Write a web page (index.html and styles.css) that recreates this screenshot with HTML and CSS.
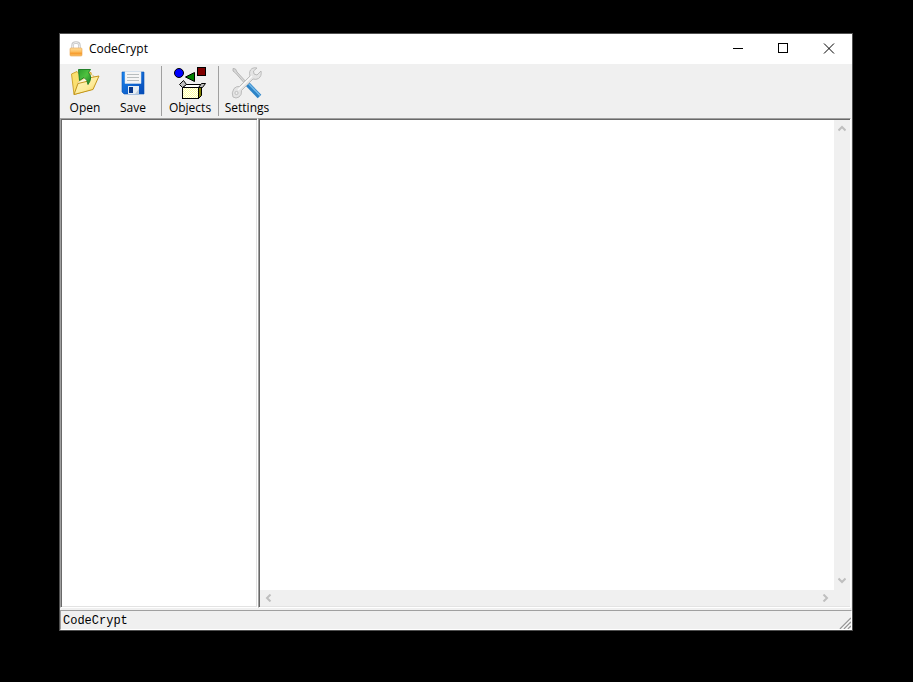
FILE: index.html
```html
<!DOCTYPE html>
<html lang="en">
<head>
<meta charset="utf-8">
<title>CodeCrypt</title>
<link rel="stylesheet" href="styles.css">
</head>
<body>
<main class="window">
  <header class="titlebar">
    <svg class="app-icon" viewBox="0 0 16 16" aria-hidden="true">
      <defs><linearGradient id="lock" x2="0" y2="1"><stop stop-color="#ffe0a0"/><stop offset=".5" stop-color="#fdbb59"/><stop offset=".65" stop-color="#f79a2b"/><stop offset="1" stop-color="#fbc46c"/></linearGradient></defs>
      <path d="M4.500 8V4.500Q4.500 1.500 8 1.500T11.500 4.500V8" fill="none" stroke="#c4c4c4" stroke-width="2.400"/>
      <path d="M4.500 7V4.500Q4.500 1.500 8 1.500T11.500 4.500V7" fill="none" stroke="#eee" stroke-width="1"/>
      <rect x="2" y="7" width="12" height="8" rx="1" fill="url(#lock)" stroke="#e9a24c" stroke-width=".6"/>
    </svg>
    <h1 class="title">CodeCrypt</h1>
    <div class="caption-buttons">
      <button class="caption" aria-label="Minimize"><svg viewBox="0 0 11 11" shape-rendering="crispEdges"><path d="M1 4.500H11"/></svg></button>
      <button class="caption" aria-label="Maximize"><svg viewBox="0 0 11 11" shape-rendering="crispEdges"><rect x=".5" y="-.5" width="9" height="9"/></svg></button>
      <button class="caption" aria-label="Close"><svg viewBox="0 0 11 11"><path d="M0 -.5L10 9.500M10 -.5L0 9.500"/></svg></button>
    </div>
  </header>

  <nav class="toolbar" aria-label="Toolbar">
    <button class="tool">
      <svg viewBox="0 0 32 32" aria-hidden="true">
        <defs><linearGradient id="fold" x2="1" y2="1"><stop stop-color="#fff8c8"/><stop offset=".6" stop-color="#fdeb98"/><stop offset="1" stop-color="#f0c53a"/></linearGradient>
        <linearGradient id="arrow" x2="1" y2="1"><stop stop-color="#2c9e2c"/><stop offset=".5" stop-color="#4fc240"/><stop offset="1" stop-color="#168020"/></linearGradient></defs>
        <path d="M2.500 7L8 4.500L10.500 7L22 5.500L24 22L5 27.500Z" fill="#fbe070" stroke="#cfa530"/>
        <path d="M9 15L22 7.500L25 9L22 22L6 26Z" fill="#fff9e0" stroke="#dcc070" stroke-width=".7"/>
        <path d="M5 27.500L9 16.500L19.500 14L22 10.500L30 9L24 22.500Z" fill="url(#fold)" stroke="#c4961b"/>
        <path d="M9.500 2.500H21.500L19.500 5.500Q24 10.500 19 17.500Q18.500 12.500 15 10.500L10.500 13.500Z" fill="url(#arrow)" stroke="#238029" stroke-width="1"/>
      </svg>
      <span>Open</span>
    </button>
    <button class="tool">
      <svg viewBox="0 0 32 32" aria-hidden="true">
        <defs><linearGradient id="disk" x2="1" y2="1"><stop stop-color="#1c86ee"/><stop offset="1" stop-color="#0649b6"/></linearGradient></defs>
        <path d="M5 5H27V27H7L5 25Z" fill="url(#disk)" stroke="#0754b8" stroke-width=".6"/>
        <path d="M8 4.500H24V16.500H8Z" fill="#f5f5f5" stroke="#d9e5ee" stroke-width=".5"/>
        <path d="M10 7.500H22M10 10.500H22M10 13.500H22" stroke="#b8bdbe"/>
        <path d="M11 19H22V27H11Z" fill="#e5edf3"/>
        <path d="M12 20H16V26H12Z" fill="#0a3686"/>
        <path d="M18 27L22 22V27Z" fill="#bdcbd9"/>
      </svg>
      <span>Save</span>
    </button>
    <span class="separator"></span>
    <button class="tool">
      <svg viewBox="0 0 32 33" class="tall" aria-hidden="true">
        <g stroke="#000">
          <circle cx="5" cy="6" r="4.500" fill="#00f"/>
          <path d="M11.500 10L20.500 5.500V14.500Z" fill="#008000"/>
          <rect x="23.500" y=".5" width="8" height="8" fill="#800000"/>
          <path d="M9 20.500L12 17.500H28L24.500 20.500Z" fill="#fff"/>
          <path d="M24.500 20.500L27.500 17.500V28.500L24.500 31.500Z" fill="#808000"/>
          <rect x="8.500" y="20.500" width="16" height="11" fill="#ffff98"/>
          <path d="M5.500 17.500L9.500 13.500L12.500 17.500L8.500 20.500Z" fill="#c0c0c0"/>
          <path d="M24.500 20.500L27.500 16.500H31.500L28.500 20.500Z" fill="#c0c0c0"/>
        </g>
        <path d="M9 21.500H24M10 22.500H24M9 23.500H24M10 24.500H24M9 25.500H24M10 26.500H24M9 27.500H24M10 28.500H24M9 29.500H24M10 30.500H24" fill="none" stroke="#fff" stroke-dasharray="1 1"/>
      </svg>
      <span>Objects</span>
    </button>
    <span class="separator"></span>
    <button class="tool">
      <svg viewBox="0 0 32 32" aria-hidden="true">
        <path d="M2 1.500L4.500 2L6 5L17 17L15.500 18.500L4.500 6L2 4Z" fill="#d8d8d8" stroke="#aaa" stroke-width=".8"/>
        <path d="M16 16.500L28.500 29.500" stroke="#2c83c7" stroke-width="5"/>
        <path d="M17 16L29 28.500" stroke="#73b8e8" stroke-width="1.500"/>
        <path d="M19 9Q17.500 4 21 1.500Q23 .3 26 1L22.500 4L23 7L26 8L30 4Q31 9 27.500 11.500Q25 13 22 12L10.500 23.500Q11 28 8 30Q5 32 2 30Q0 26 3 21.500Q5.500 19 8.500 19.500Z" fill="#e4e4e4" stroke="#b5b5b5" stroke-width=".9"/>
        <path d="M21 9L7 23" stroke="#fafafa" stroke-width="1.500"/>
        <circle cx="5.500" cy="26" r="1.600" fill="#f0f0f0" stroke="#b5b5b5" stroke-width=".8"/>
      </svg>
      <span>Settings</span>
    </button>
  </nav>

  <div class="panes">
    <aside class="pane" aria-label="Object list"></aside>
    <section class="pane editor">
      <textarea class="code" aria-label="Code" spellcheck="false"></textarea>
      <div class="scroll vertical">
        <button class="scroll-button" aria-label="Scroll up"><svg viewBox="0 0 8 8"><path d="M.5 6.500L4 3L7.500 6.500"/></svg></button>
        <button class="scroll-button" aria-label="Scroll down"><svg viewBox="0 0 8 8"><path d="M.5 1.500L4 5L7.500 1.500"/></svg></button>
      </div>
      <div class="scroll">
        <button class="scroll-button" aria-label="Scroll left"><svg viewBox="0 0 8 8"><path d="M6.500 .5L3 4L6.500 7.500"/></svg></button>
        <button class="scroll-button" aria-label="Scroll right"><svg viewBox="0 0 8 8"><path d="M1.500 .5L5 4L1.500 7.500"/></svg></button>
      </div>
    </section>
  </div>

  <footer class="statusbar">
    <span>CodeCrypt</span>
    <svg class="grip" viewBox="0 0 12 12" aria-hidden="true"><path d="M1 12L12 1M5 12L12 5M9 12L12 9" stroke="#999" stroke-width="1.500"/><path d="M2.500 12L12 2.500M6.500 12L12 6.500M10.500 12L12 10.500" stroke="#fff"/></svg>
  </footer>
</main>
</body>
</html>
```
FILE: styles.css
```css
* { box-sizing: border-box; }

body {
  margin: 0;
  min-height: 100vh;
  padding: 33px 60px 51px 59px;
  display: flex;
  background: #000;
  color: #000;
  font: 12px/16px "Open Sans", "Noto Sans", sans-serif;
}

button {
  margin: 0;
  padding: 0;
  border: 0;
  background: none;
  color: inherit;
  font: inherit;
}

svg { display: block; }

.window {
  flex: 1;
  min-width: 0;
  display: flex;
  flex-direction: column;
  border: 1px solid #505050;
  background: #f0f0f0;
}

.titlebar {
  display: flex;
  align-items: center;
  height: 30px;
  padding-left: 8px;
  background: #fff;
}

.app-icon { width: 16px; height: 16px; }

.title {
  flex: 1;
  margin: 0 0 0 5px;
  font-size: 12px;
  font-weight: 400;
}

.caption-buttons { display: flex; }

.caption {
  width: 46px;
  height: 30px;
  display: grid;
  place-items: center;
}

.caption svg {
  width: 11px;
  height: 11px;
  overflow: visible;
  fill: none;
  stroke: #000;
}

.toolbar {
  display: flex;
  height: 54px;
  padding: 2px 1px;
}

.tool {
  width: 48px;
  display: flex;
  flex-direction: column;
  align-items: center;
  padding-top: 1px;
}

.tool svg { width: 32px; height: 33px; padding-bottom: 1px; }

.tool .tall { padding-bottom: 0; }

.separator {
  width: 1px;
  margin: 0 4px;
  background: #a0a0a0;
}

.panes {
  flex: 1;
  display: grid;
  grid-template-columns: 1fr 3fr;
  padding-right: 1px;
}

.pane {
  border: 1px solid;
  border-color: #a0a0a0 #fff #fff #a0a0a0;
  background: #fff;
  box-shadow: inset 1px 1px #696969, inset -1px -1px #e3e3e3;
}

.editor {
  display: grid;
  grid-template: 1fr 16px / 1fr 16px;
  padding: 1px 0 1px 1px;
}

.code {
  width: 100%;
  height: 100%;
  padding: 2px;
  border: 0;
  outline: 0;
  resize: none;
  background: #fff;
  font: 12px/16px "Liberation Mono", monospace;
}

.scroll {
  display: flex;
  justify-content: space-between;
  background: #f0f0f0;
}

.vertical {
  flex-direction: column;
  grid-row: span 2;
  padding-bottom: 17px;
}

.scroll-button {
  width: 16px;
  height: 16px;
  display: grid;
  place-items: center;
}

.scroll-button svg {
  width: 8px;
  height: 8px;
  fill: none;
  stroke: #bfbfbf;
  stroke-width: 2;
}

.statusbar {
  display: flex;
  align-items: flex-end;
  justify-content: space-between;
  height: 20px;
  margin-top: 2px;
  padding-left: 2px;
  border: 1px solid;
  border-color: #a0a0a0 #fff #fff #a0a0a0;
  font: 12px/16px "Liberation Mono", monospace;
}

.grip { width: 12px; height: 12px; }
```
